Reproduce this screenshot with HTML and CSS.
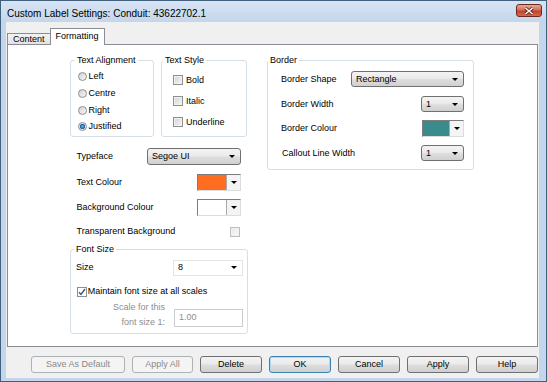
FILE: index.html
```html
<!DOCTYPE html>
<html lang="en">
<head>
  <meta charset="UTF-8">
  <title>Custom Label Settings</title>
  <link rel="stylesheet" href="styles.css">
</head>
<body>
  <div class="window">
    <div class="titlebar">
      <span class="title">Custom Label Settings: Conduit: 43622702.1</span>
      <span class="close">
        <svg width="10" height="8" viewBox="0 0 10 8">
          <path d="M1.5 1 L8.5 7 M8.5 1 L1.5 7" stroke="#5a2014" stroke-width="3"/>
          <path d="M1.5 1 L8.5 7 M8.5 1 L1.5 7" stroke="#fff" stroke-width="1.5"/>
        </svg>
      </span>
    </div>
    <div class="frame">
      <div class="client">
        <div class="tabs">
          <span class="tab">Content</span>
          <span class="tab active">Formatting</span>
        </div>

        <div class="page">
          <div class="col-left">
            <div class="top-boxes">
              <fieldset class="box align-box">
                <legend>Text Alignment</legend>
                <div class="opt"><span class="radio"></span>Left</div>
                <div class="opt"><span class="radio"></span>Centre</div>
                <div class="opt"><span class="radio"></span>Right</div>
                <div class="opt"><span class="radio on"></span>Justified</div>
              </fieldset>
              <fieldset class="box style-box">
                <legend>Text Style</legend>
                <div class="opt tall"><span class="check"></span>Bold</div>
                <div class="opt tall"><span class="check"></span>Italic</div>
                <div class="opt tall"><span class="check"></span>Underline</div>
              </fieldset>
            </div>

            <div class="field first">
              <span>Typeface</span>
              <span class="combo typeface"><span>Segoe UI</span><span class="arrow"></span></span>
            </div>
            <div class="field">
              <span>Text Colour</span>
              <span class="picker"><span class="swatch orange"></span><span class="drop"><span class="arrow"></span></span></span>
            </div>
            <div class="field">
              <span>Background Colour</span>
              <span class="picker"><span class="swatch"></span><span class="drop"><span class="arrow"></span></span></span>
            </div>
            <div class="field short">
              <span>Transparent Background</span>
              <span class="check faint"></span>
            </div>

            <fieldset class="box font-box">
              <legend>Font Size</legend>
              <div class="size-row">
                <span>Size</span>
                <span class="combo plain"><span>8</span><span class="arrow"></span></span>
              </div>
              <div class="keep-row">
                <span class="check on">
                  <svg width="8" height="8" viewBox="0 0 8 8"><path d="M1 4.2 L3 6.4 L7 1" fill="none" stroke="#42578a" stroke-width="1.5"/></svg>
                </span>Maintain font size at all scales
              </div>
              <div class="scale-row">
                <span class="scale-label">Scale for this<br>font size 1:</span>
                <span class="scale-input">1.00</span>
              </div>
            </fieldset>
          </div>

          <div class="col-right">
            <fieldset class="box border-box">
              <legend>Border</legend>
              <div class="brow">
                <span>Border Shape</span>
                <span class="combo shape"><span>Rectangle</span><span class="arrow"></span></span>
              </div>
              <div class="brow">
                <span>Border Width</span>
                <span class="combo small"><span>1</span><span class="arrow"></span></span>
              </div>
              <div class="brow colour">
                <span>Border Colour</span>
                <span class="picker narrow"><span class="swatch teal"></span><span class="drop"><span class="arrow"></span></span></span>
              </div>
              <div class="brow">
                <span class="callout">Callout Line Width</span>
                <span class="combo small"><span>1</span><span class="arrow"></span></span>
              </div>
            </fieldset>
          </div>
        </div>

        <div class="buttons">
          <button class="btn wide" disabled>Save As Default</button>
          <button class="btn narrow" disabled>Apply All</button>
          <button class="btn">Delete</button>
          <button class="btn default">OK</button>
          <button class="btn">Cancel</button>
          <button class="btn">Apply</button>
          <button class="btn">Help</button>
        </div>
      </div>
    </div>
  </div>
</body>
</html>
```

FILE: styles.css
```css
* {
  box-sizing: border-box;
}
body {
  margin: 0;
  font-family: "Liberation Sans", Arial, sans-serif;
  font-size: 9px;
  line-height: 11px;
  color: #000;
  background: #fff;
}
.window {
  width: 547px;
  height: 382px;
  border: 1px solid #41607e;
  display: flex;
  flex-direction: column;
  background: #c4d6ec;
}
.titlebar {
  height: 21px;
  display: flex;
  align-items: flex-start;
  justify-content: space-between;
  padding: 0 4px 0 6px;
  background: linear-gradient(#d7e4f4, #c4d6ec);
}
.title {
  font-size: 10px;
  line-height: 12px;
  margin-top: 7px;
  color: #000;
}
.close {
  margin-top: 3px;
  width: 26px;
  height: 13px;
  border: 1px solid #6d2a1f;
  border-radius: 3px;
  background: linear-gradient(#e6a996, #d4705a 45%, #c2432b 55%, #d36a4f);
  display: flex;
  align-items: center;
  justify-content: center;
}
.frame {
  flex: 1;
  display: flex;
  padding: 0 7px 3px 5px;
}
.client {
  flex: 1;
  background: #f0f0f0;
  padding: 6px 1px 5px 1px;
  display: flex;
  flex-direction: column;
}
.tabs {
  height: 16px;
  display: flex;
  align-items: flex-end;
  position: relative;
  z-index: 1;
}
.tab {
  height: 11px;
  padding: 0 5px;
  border: 1px solid #898c95;
  border-bottom: none;
  background: linear-gradient(#f3f3f3, #e2e2e2);
  line-height: 10px;
}
.tab.active {
  height: 17px;
  margin-bottom: -1px;
  margin-left: -1px;
  background: #fff;
  line-height: 14px;
}
.page {
  height: 303px;
  border: 1px solid #898c95;
  background: #fff;
  display: flex;
  align-items: flex-start;
  padding: 9.5px 0 0 62px;
}
.col-left {
  width: 178px;
  display: flex;
  flex-direction: column;
}
.col-right {
  width: 207px;
  margin-left: 19px;
}

/* group boxes */
.box {
  margin: 0;
  padding: 0;
  min-width: 0;
  border: 1px solid #d5dfe5;
  border-radius: 3px;
}
.box legend {
  padding: 0 2px;
  line-height: 11px;
}
.top-boxes {
  display: flex;
  gap: 7px;
}
.align-box {
  width: 84px;
  padding: 3px 0 1px 6.5px;
}
.align-box legend {
  margin-left: -2.5px;
}
.style-box {
  width: 86px;
  padding: 4px 0 0 11px;
}
.style-box legend {
  margin-left: -10px;
}
.opt {
  display: flex;
  align-items: center;
  height: 16.7px;
}
.opt.tall {
  height: 21px;
}
.radio {
  width: 9px;
  height: 9px;
  margin-right: 2px;
  border: 1px solid #8e8f8f;
  border-radius: 50%;
  background: linear-gradient(135deg, #d2d2d2, #f7f7f7);
}
.radio.on {
  background: radial-gradient(circle at 50% 50%, #5fb2e6 0, #1f63a6 2.4px, #e4e4e4 3px, #f6f6f6 100%);
}
.check {
  width: 10px;
  height: 10px;
  margin-right: 3px;
  border: 1px solid #8e8f8f;
  background: linear-gradient(135deg, #d3d3d3, #f6f6f6);
  box-shadow: inset 0 0 0 1px #f2f2f2;
  display: flex;
  align-items: center;
  justify-content: center;
}
.check.faint {
  margin-right: 0;
  border-color: #bcbcbc;
  background: linear-gradient(135deg, #e6e6e6, #fafafa);
}
.check.on {
  background: #fff;
  box-shadow: none;
}

/* label + control rows */
.field {
  display: flex;
  align-items: center;
  justify-content: space-between;
  height: 17px;
  margin-top: 8.5px;
  padding: 0 7px 0 6.5px;
}
.field.first {
  margin-top: 11px;
}
.field.short {
  height: 14px;
  padding-right: 8px;
}
.combo {
  display: flex;
  align-items: center;
  justify-content: space-between;
  height: 17px;
  padding: 0 5px 0 4px;
  border: 1px solid #707070;
  border-radius: 3px;
  background: linear-gradient(#f3f3f3, #ebebeb 45%, #dddddd 55%, #d0d0d0);
}
.combo.typeface {
  width: 94px;
}
.combo.shape {
  width: 113px;
  height: 16px;
}
.combo.small {
  width: 43px;
  height: 16px;
}
.combo.plain {
  width: 70px;
  height: 16px;
  border-color: #e2e4e6;
  border-radius: 0;
  background: #fff;
}
.arrow {
  width: 0;
  height: 0;
  border-left: 3px solid transparent;
  border-right: 3px solid transparent;
  border-top: 3px solid #000;
}
.picker {
  display: flex;
  width: 44px;
  height: 17px;
  border: 1px solid;
  border-color: #7d7d7d #dcdcdc #dcdcdc #7d7d7d;
  background: #fff;
}
.picker.narrow {
  width: 42px;
}
.swatch {
  flex: 1;
  background: #fff;
}
.swatch.orange {
  background: #ff6d21;
}
.swatch.teal {
  background: #3a8c8c;
}
.drop {
  width: 14px;
  display: flex;
  align-items: center;
  justify-content: center;
  border-left: 1px solid #a9a9a9;
  background: #f4f4f4;
}

/* font size group */
.font-box {
  margin-top: 5.7px;
  padding: 4.5px 0 3.4px;
}
.font-box legend {
  margin-left: 3px;
}
.size-row {
  display: flex;
  align-items: center;
  justify-content: space-between;
  height: 16px;
  padding: 0 4px 0 5px;
}
.keep-row {
  display: flex;
  align-items: center;
  height: 12px;
  margin-top: 10px;
  padding-left: 5.7px;
}
.keep-row .check {
  margin-right: 1px;
}
.scale-row {
  display: flex;
  justify-content: flex-end;
  align-items: flex-start;
  gap: 9px;
  margin-top: 2px;
  padding-right: 4px;
}
.scale-label {
  text-align: right;
  line-height: 14.6px;
  color: #8d8d8d;
}
.scale-input {
  width: 69px;
  height: 17.7px;
  margin-top: 9px;
  padding-left: 4px;
  border: 1px solid #c9cdd0;
  color: #8d8d8d;
  line-height: 15.7px;
}

/* border group */
.border-box {
  padding: 5.5px 0 8px;
}
.border-box legend {
  margin-left: 0;
}
.brow {
  display: flex;
  align-items: center;
  justify-content: space-between;
  height: 16px;
  padding: 0 9px 0 13px;
}
.brow + .brow {
  margin-top: 9px;
}
.brow.colour {
  height: 17px;
  margin-top: 8px;
}
.brow.colour + .brow {
  margin-top: 8px;
}
.callout {
  margin-left: 1px;
}

/* dialog buttons */
.buttons {
  display: flex;
  justify-content: flex-end;
  gap: 7px;
  margin-top: 9px;
}
.btn {
  width: 62px;
  height: 17px;
  padding: 0;
  font-family: inherit;
  font-size: 9px;
  line-height: 15px;
  color: #000;
  border: 1px solid #707070;
  border-radius: 3px;
  background: linear-gradient(#f3f3f3, #ebebeb 45%, #dddddd 55%, #cfcfcf);
}
.btn.wide {
  width: 94px;
}
.btn.narrow {
  width: 61px;
}
.btn:disabled {
  color: #8a8a8a;
  border-color: #adb2b5;
  background: #f4f4f4;
}
.btn.default {
  border-color: #3c7fb1;
  box-shadow: inset 0 0 0 1px #a9dcf6;
}
```
